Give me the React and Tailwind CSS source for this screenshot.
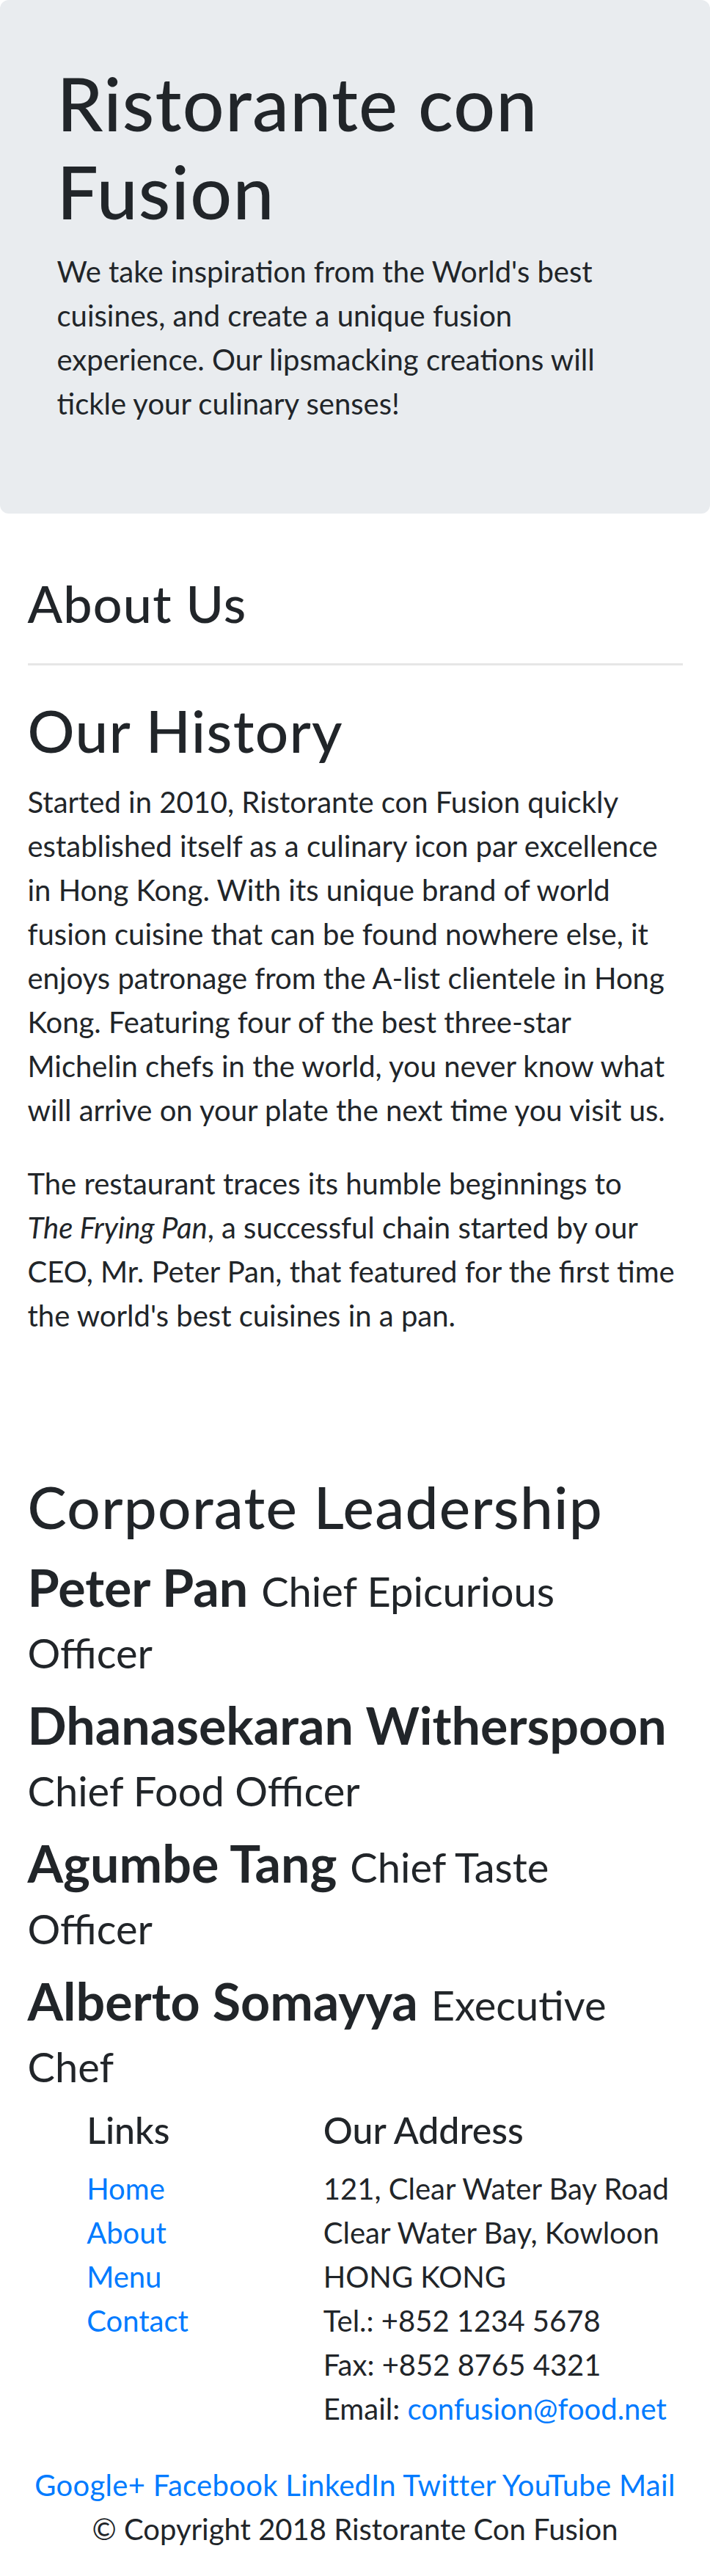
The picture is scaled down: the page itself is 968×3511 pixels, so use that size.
import React from 'react'

const leaders = [
  { name: 'Peter Pan', designation: 'Chief Epicurious Officer' },
  { name: 'Dhanasekaran Witherspoon', designation: 'Chief Food Officer' },
  { name: 'Agumbe Tang', designation: 'Chief Taste Officer' },
  { name: 'Alberto Somayya', designation: 'Executive Chef' },
]

const socials = ['Google+', 'Facebook', 'LinkedIn', 'Twitter', 'YouTube', 'Mail']

const App = () => {
  return (
    <div className="font-['Lato',sans-serif] text-[#212529] text-[40px] leading-[60px] bg-white">

      {/* Jumbotron */}
      <header className="bg-[#e9ecef] rounded-[12px] px-[40px] py-[80px] mb-[80px]">
        <div className="px-[37.5px]">
          <h1 className="text-[100px] leading-[120px] font-medium tracking-[1.3px] mb-[20px]">
            Ristorante con Fusion
          </h1>
          <p className="mb-[40px]">
            We take inspiration from the World's best cuisines, and create a unique fusion experience. Our lipsmacking creations will tickle your culinary senses!
          </p>
        </div>
      </header>

      <div className="px-[37.5px]">
        {/* About heading */}
        <h3 className="text-[70px] leading-[84px] font-medium tracking-[1.2px]">About Us</h3>
        <hr className="my-[40px] border-0 h-[3px] bg-[#e6e6e6]" />

        {/* History */}
        <section>
          <h2 className="text-[80px] leading-[96px] font-medium tracking-[1.3px] mb-[20px]">Our History</h2>
          <p className="mb-[40px]">
            Started in 2010, Ristorante con Fusion quickly established itself as a culinary icon par excellence in Hong Kong. With its unique brand of world fusion cuisine that can be found nowhere else, it enjoys patronage from the A-list clientele in Hong Kong. Featuring four of the best three-star Michelin chefs in the world, you never know what will arrive on your plate the next time you visit us.
          </p>
          <p className="mb-[40px]">
            The restaurant traces its humble beginnings to <em className="whitespace-nowrap">The Frying Pan</em>, a successful chain started by our CEO, Mr. Peter Pan, that featured for the first time the world's best cuisines in a pan.
          </p>
        </section>

        {/* Leadership */}
        <section className="mt-[182px]">
          <h2 className="text-[80px] leading-[96px] font-medium tracking-[1.3px] mb-[20px]">Corporate Leadership</h2>
          {leaders.map(leader => (
            <h3 key={leader.name} className="text-[70px] leading-[84px] mb-[20px]">
              <span className="font-bold">{leader.name}</span>{' '}
              <small className="text-[56px] leading-none font-normal">{leader.designation}</small>
            </h3>
          ))}
        </section>
      </div>

      {/* Footer */}
      <footer>
        <div className="flex flex-wrap">
          <div className="ml-[80.67px] w-[322.67px] px-[37.5px]">
            <h5 className="text-[50px] leading-[60px] font-medium mb-[20px]">Links</h5>
            <ul className="mb-[40px]">
              <li><a href="#" className="text-[#007bff]">Home</a></li>
              <li><a href="#" className="text-[#007bff]">About</a></li>
              <li><a href="#" className="text-[#007bff]">Menu</a></li>
              <li><a href="#" className="text-[#007bff]">Contact</a></li>
            </ul>
          </div>
          <div className="w-[564.67px] px-[37.5px]">
            <h5 className="text-[50px] leading-[60px] font-medium mb-[20px]">Our Address</h5>
            <address className="not-italic mb-[40px]">
              121, Clear Water Bay Road<br />
              Clear Water Bay, Kowloon<br />
              HONG KONG<br />
              Tel.: +852 1234 5678<br />
              Fax: +852 8765 4321<br />
              Email: <a href="mailto:confusion@food.net" className="text-[#007bff]">confusion@food.net</a>
            </address>
          </div>
          <div className="w-full px-[37.5px] mt-[4px] text-center tracking-[0.3px]">
            {socials.map((s, i) => (
              <React.Fragment key={s}>
                <a href="#" className="text-[#007bff]">{s}</a>{i < socials.length - 1 ? ' ' : ''}
              </React.Fragment>
            ))}
          </div>
        </div>
        <div className="flex justify-center">
          <p className="px-[37.5px] mb-[40px]">© Copyright 2018 Ristorante Con Fusion</p>
        </div>
      </footer>
    </div>
  )
}

export default App
